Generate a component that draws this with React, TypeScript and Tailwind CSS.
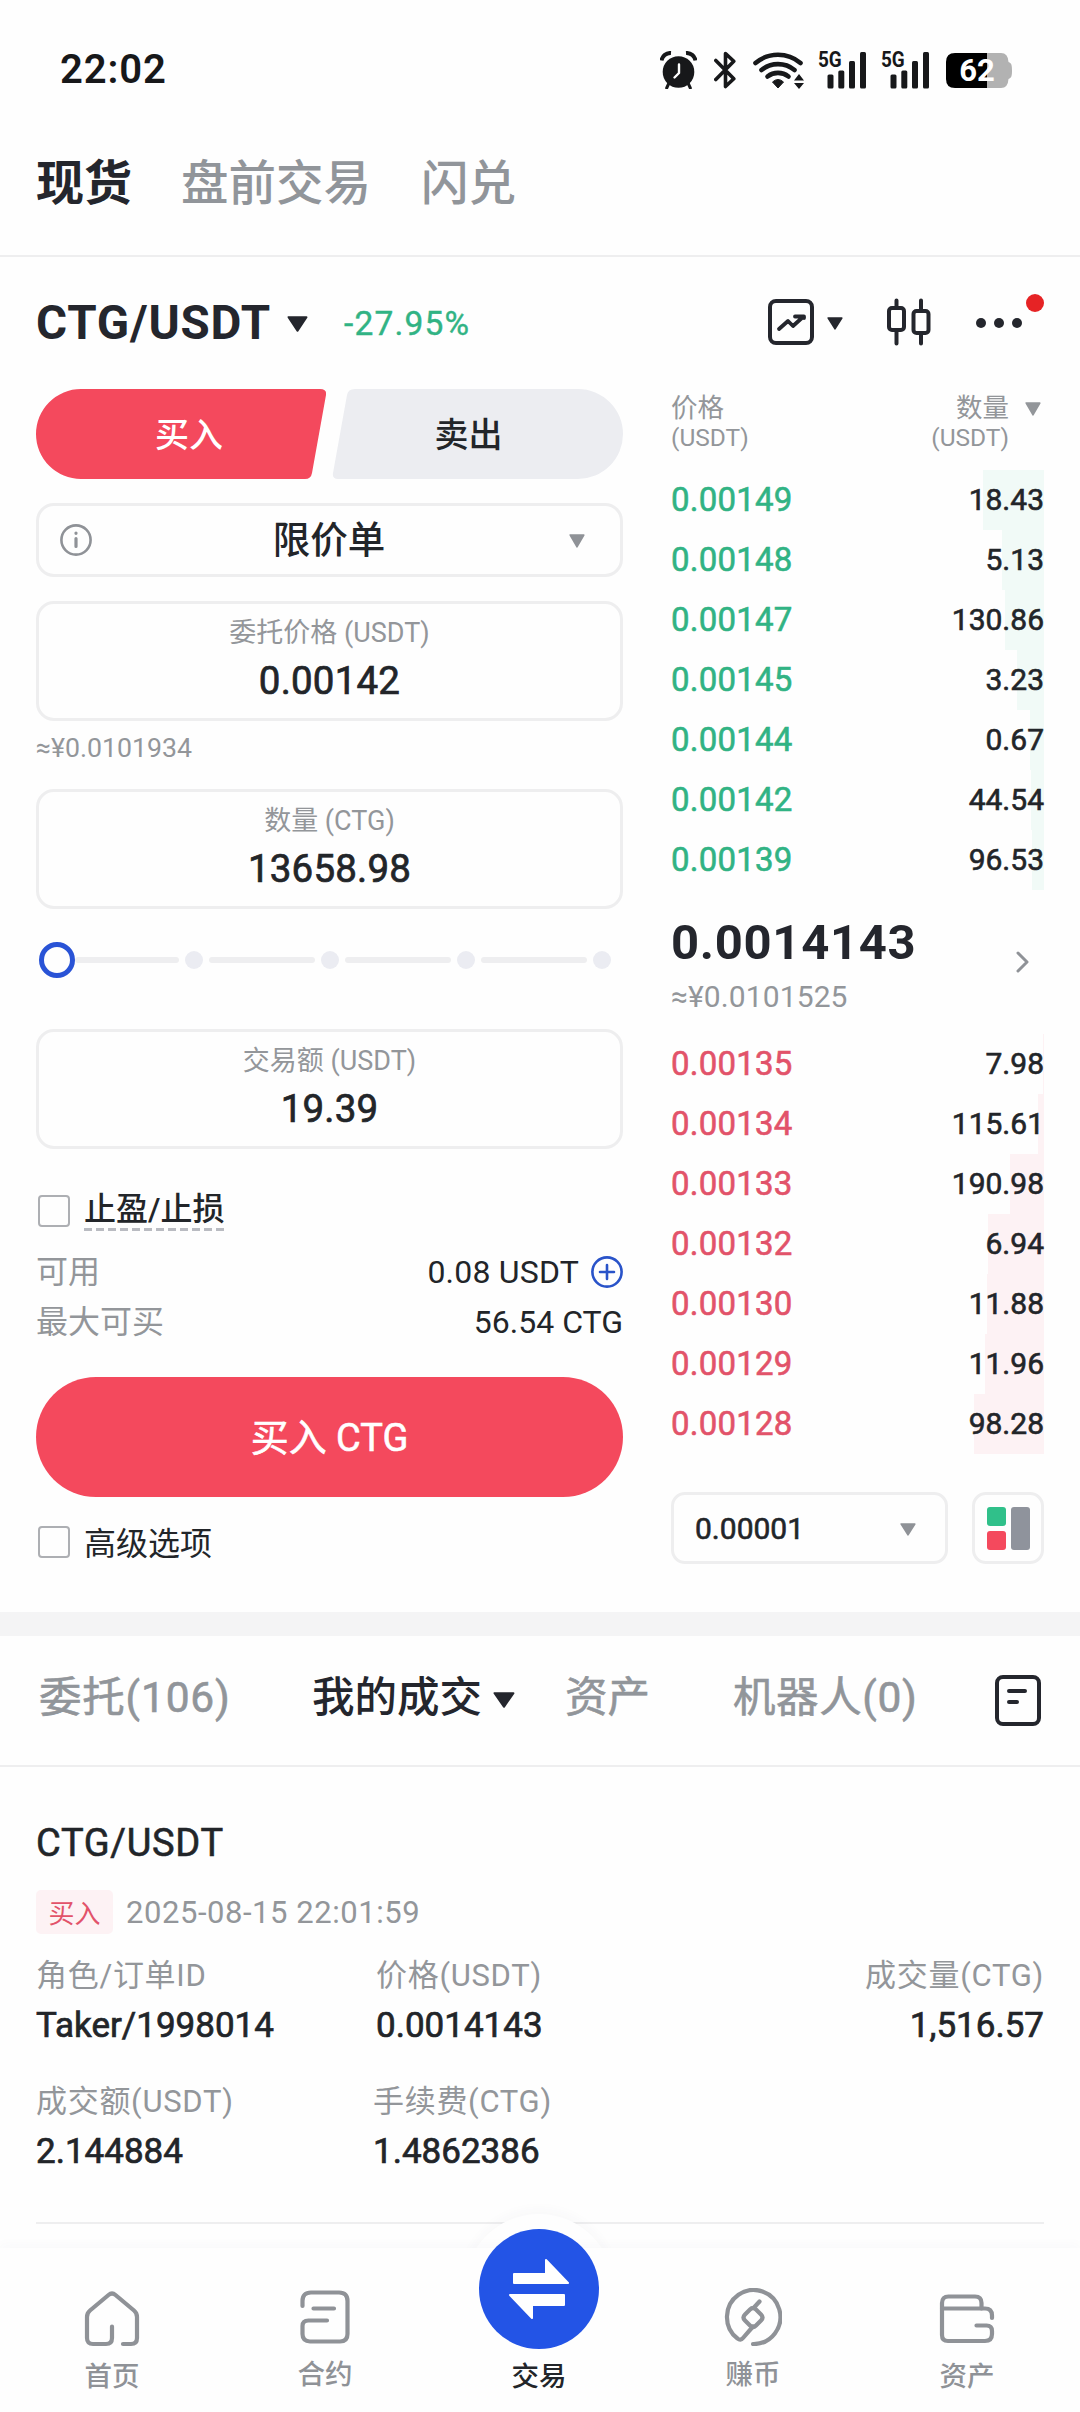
import { clsx } from "clsx";

type Level = { price: string; amount: string; depth: number };

const asks: Level[] = [
  { price: "0.00149", amount: "18.43", depth: 61 },
  { price: "0.00148", amount: "5.13", depth: 42 },
  { price: "0.00147", amount: "130.86", depth: 39 },
  { price: "0.00145", amount: "3.23", depth: 27 },
  { price: "0.00144", amount: "0.67", depth: 14 },
  { price: "0.00142", amount: "44.54", depth: 13 },
  { price: "0.00139", amount: "96.53", depth: 12 },
];

const bids: Level[] = [
  { price: "0.00135", amount: "7.98", depth: 1 },
  { price: "0.00134", amount: "115.61", depth: 6 },
  { price: "0.00133", amount: "190.98", depth: 34 },
  { price: "0.00132", amount: "6.94", depth: 56 },
  { price: "0.00130", amount: "11.88", depth: 57 },
  { price: "0.00129", amount: "11.96", depth: 59 },
  { price: "0.00128", amount: "98.28", depth: 70 },
];

function Triangle({ className }: { className: string }) {
  return (
    <svg viewBox="0 0 20 16" preserveAspectRatio="none" className={className} aria-hidden>
      <path
        d="M1.5 1.2h17L10 14.6z"
        fill="currentColor"
        stroke="currentColor"
        strokeWidth="2"
        strokeLinejoin="round"
      />
    </svg>
  );
}

function Signal() {
  return (
    <div className="relative h-[38px] w-12">
      <span className="absolute left-0 top-0 origin-left scale-x-[0.86] text-[22px] font-bold leading-[17px]">
        5G
      </span>
      <svg viewBox="0 0 48 38" className="h-[38px] w-12" fill="currentColor" aria-hidden>
        <rect x="9.5" y="23.5" width="6" height="14" rx="1.5" />
        <rect x="20.3" y="19.5" width="6" height="18" rx="1.5" />
        <rect x="31" y="10" width="6" height="27.5" rx="1.5" />
        <rect x="42" y="1" width="6" height="36.5" rx="1.5" />
      </svg>
    </div>
  );
}

function StatusBar() {
  return (
    <div className="flex h-[139px] items-center pl-[60px] text-[#17181a]">
      <span className="w-[600px] pt-px text-[40px] font-semibold leading-none tracking-[0.9px]">
        22:02
      </span>

      <svg viewBox="0 0 37 38" className="h-[38px] w-[37px] shrink-0" aria-hidden>
        <path d="M1.5 9.5A9 9 0 0 1 11 2" stroke="currentColor" strokeWidth="4" fill="none" />
        <path d="M35.5 9.5A9 9 0 0 0 26 2" stroke="currentColor" strokeWidth="4" fill="none" />
        <path d="M9 32l-2.3 5M28 32l2.3 5" stroke="currentColor" strokeWidth="3" strokeLinecap="round" />
        <circle cx="18.5" cy="21" r="15.8" fill="currentColor" />
        <path
          d="M19 13.5v8.5l-4.5 4.5"
          stroke="#fff"
          strokeWidth="2.4"
          strokeLinecap="round"
          strokeLinejoin="round"
          fill="none"
        />
      </svg>

      <svg viewBox="0 0 23 38" className="ml-[17px] h-[38px] w-[23px] shrink-0" aria-hidden>
        <path
          d="M1.8 9.5l18 18.2-8.3 7.8V2.5l8.3 7.8-18 18.2"
          stroke="currentColor"
          strokeWidth="3.6"
          strokeLinecap="round"
          strokeLinejoin="round"
          fill="none"
        />
      </svg>

      <svg viewBox="0 0 52 38" className="ml-4 h-[38px] w-[52px] shrink-0" aria-hidden>
        <g stroke="currentColor" strokeWidth="4.6" strokeLinecap="round" fill="none">
          <path d="M2.5 12a35 35 0 0 1 45 0" />
          <path d="M8.5 19a26 26 0 0 1 33 0" />
          <path d="M14.5 25.5a17 17 0 0 1 21 0" />
        </g>
        <path d="M19.5 31q5.5-5 11 0l-5.5 6z" fill="currentColor" stroke="currentColor" strokeWidth="1" strokeLinejoin="round" />
        <path d="M41 29.5h10l-5-6.5zM41 32h10l-5 6z" fill="currentColor" />
      </svg>

      <div className="ml-[13px]">
        <Signal />
      </div>
      <div className="ml-[15px]">
        <Signal />
      </div>

      <div className="relative ml-[17px] mt-[2px] h-[35px] w-[66px]">
        <svg viewBox="0 0 66 35" className="h-[35px] w-[66px]" aria-hidden>
          <path
            d="M8 0h47q7 0 7.5 9c3 1 3.5 3 3.5 8.5s-.5 7.5-3.5 8.5q-.5 9-7.5 9H41V0z"
            fill="#b2b2b2"
          />
          <path d="M9 0h32v35H9q-9 0-9-9V9q0-9 9-9z" fill="#000" />
        </svg>
        <span className="absolute inset-x-0 top-0 pr-[4px] text-center text-[31px] font-bold leading-[36px] text-white">
          62
        </span>
      </div>
    </div>
  );
}

function MarketTabs() {
  return (
    <div className="flex h-[118px] items-start border-b-2 border-[#eeeeef] pl-9 text-[47.5px] leading-[90px] text-[#91959a]">
      <span className="w-[145px] text-[48px] font-bold text-[#24262d]">现货</span>
      <span className="w-60 font-medium">盘前交易</span>
      <span className="font-medium">闪兑</span>
    </div>
  );
}

function PairHeader() {
  return (
    <div className="flex h-[130px] items-center pl-[36px] text-[#24262d]">
      <span className="w-[251px] pt-[3px] text-[47.5px] font-bold leading-none tracking-[0.8px]">CTG/USDT</span>
      <Triangle className="mt-1 h-4 w-[21px]" />
      <span className="ml-9 w-[424px] pt-1 text-[33.5px] leading-none tracking-[1.2px] text-[#31b384] [-webkit-text-stroke:0.4px]">
        -27.95%
      </span>

      <svg viewBox="0 0 46 46" className="h-[46px] w-[46px] shrink-0" fill="none" stroke="currentColor" aria-hidden>
        <rect x="2" y="2" width="42" height="42" rx="6" strokeWidth="4" />
        <path
          d="M11 30l9-8 5 5 10.5-9.500M27 17.5h9v1.5"
          strokeWidth="3.8"
          strokeLinecap="round"
          strokeLinejoin="round"
        />
      </svg>
      <Triangle className="ml-[13px] mt-0.5 h-[13px] w-4" />

      <svg viewBox="0 0 44 48" className="ml-11 h-12 w-11 shrink-0" fill="none" stroke="currentColor" strokeWidth="4" strokeLinecap="round" aria-hidden>
        <rect x="2" y="10" width="15" height="22" rx="3" />
        <rect x="26.5" y="13" width="15" height="22" rx="3" />
        <path d="M9.5 2.5V9M9.5 33v12.500M34 2.5V12M34 36v9.5" />
      </svg>

      <div className="relative ml-[45px] mt-0.5 flex w-[46px] gap-2">
        <i className="size-[10px] rounded-full bg-current" />
        <i className="size-[10px] rounded-full bg-current" />
        <i className="size-[10px] rounded-full bg-current" />
        <i className="absolute -right-[22px] -top-6 size-[18px] rounded-full bg-[#e62325]" />
      </div>
    </div>
  );
}

function Field({ label, value, className }: { label: string; value: string; className: string }) {
  return (
    <div
      className={clsx(
        "flex h-[120px] flex-col items-center rounded-[18px] border-[3px] border-[#eeeeef]",
        className,
      )}
    >
      <span className="mt-[9px] text-[27px] leading-10 text-[#93969a]">{label}</span>
      <span className="mt-1 text-[38.5px] leading-[48px] tracking-[0.2px] [-webkit-text-stroke:0.7px]">{value}</span>
    </div>
  );
}

function Slider() {
  return (
    <div className="flex h-[102px] items-center pl-[3px]">
      <i className="size-9 rounded-full border-[5px] border-[#2953d6]" />
      {[0, 1, 2, 3].map((step) => (
        <div key={step} className="flex items-center">
          <i
            className={clsx(
              "h-1.5 rounded-full bg-[#eeeef0]",
              step === 0 ? "w-[104px]" : "ml-[6px] w-[106px]",
            )}
          />
          <i className="ml-[6px] size-[18px] rounded-full bg-[#ebecf2]" />
        </div>
      ))}
    </div>
  );
}

function OrderForm() {
  return (
    <section className="w-[587px] text-[#222529]">
      <div className="flex gap-[6px] text-[34px] leading-[92px]">
        <button className="h-[90px] w-[290px] bg-[#f4495d] pl-4 text-center font-medium text-white [clip-path:path('M45,0H284Q291,0,290,6L276,84Q275,90,269,90H45A45,45,0,0,1,45,0Z')]">
          买入
        </button>
        <button className="h-[90px] w-[291px] bg-[#ecedf1] pr-[18px] text-center font-medium [clip-path:path('M23,0H246A45,45,0,0,1,246,90H6Q0,90,1,84L15,6Q16,0,23,0Z')]">
          卖出
        </button>
      </div>

      <div className="mt-6 flex h-[74px] items-center rounded-[18px] border-[3px] border-[#eeeeef]">
        <svg viewBox="0 0 32 32" className="ml-[21px] size-8" fill="none" stroke="#8f9297" aria-hidden>
          <circle cx="16" cy="16" r="14.6" strokeWidth="2.6" />
          <path d="M16 14.5v8M16 9v.3" strokeWidth="3.2" strokeLinecap="round" />
        </svg>
        <span className="flex-1 pr-[3px] text-center text-[37.5px] font-medium leading-[70px]">限价单</span>
        <Triangle className="mr-[35px] mt-0.5 h-[14px] w-4 text-[#8f9297]" />
      </div>

      <Field label="委托价格 (USDT)" value="0.00142" className="mt-6" />
      <p className="h-[54px] text-[26.7px] leading-[55px] text-[#93969a]">≈¥0.0101934</p>
      <Field label="数量 (CTG)" value="13658.98" className="mt-[14px]" />
      <Slider />
      <Field label="交易额 (USDT)" value="19.39" className="mt-[18px]" />

      <div className="mt-[30px] flex h-16 items-center pl-0.5">
        <i className="size-8 rounded-[4px] border-[2.5px] border-[#adafb3]" />
        <div className="mb-[3px] ml-[14px]">
          <div className="mt-[2px] text-[32px] font-medium leading-9">止盈/止损</div>
          <svg viewBox="0 0 140 3" className="mt-px h-[3px] w-[140px]" aria-hidden>
            <path d="M0 1.5h140" stroke="#b9bbc1" strokeWidth="3" strokeDasharray="8 4" />
          </svg>
        </div>
      </div>

      <div className="mt-1 flex h-[50px] items-center justify-between text-[32px] leading-[50px]">
        <span className="text-[#93969a]">可用</span>
        <span className="flex items-center gap-3 tracking-[0.2px]">
          0.08 USDT
          <svg viewBox="0 0 32 32" className="size-8" fill="none" stroke="#2953c9" strokeWidth="2.6" strokeLinecap="round" aria-hidden>
            <circle cx="16" cy="16" r="14.6" />
            <path d="M16 9v14M9 16h14" />
          </svg>
        </span>
      </div>
      <div className="flex h-[50px] items-center justify-between text-[32px] leading-[50px]">
        <span className="text-[#93969a]">最大可买</span>
        <span>56.54 CTG</span>
      </div>

      <button className="mt-[30px] block h-[120px] w-full rounded-full bg-[#f4495d] text-center text-[38px] leading-[123px] text-white [-webkit-text-stroke:0.6px]">
        买入 CTG
      </button>

      <div className="mt-[13px] flex h-16 items-center pl-0.5">
        <i className="size-8 rounded-[4px] border-[2.5px] border-[#adafb3]" />
        <span className="ml-[14px] mt-1 text-[32px] leading-10">高级选项</span>
      </div>
    </section>
  );
}

function Levels({ levels, side }: { levels: Level[]; side: "ask" | "bid" }) {
  return (
    <div>
      {levels.map((level) => (
        <div key={level.price} className="relative flex h-[60px] justify-between leading-[60px]">
          <i
            className={clsx("absolute right-0 top-0 h-full", side === "ask" ? "bg-[#f1faf7]" : "bg-[#fdf2f4]")}
            style={{ width: level.depth }}
          />
          <span
            className={clsx(
              "text-[33px] tracking-[0.2px] [-webkit-text-stroke:0.6px]",
              side === "ask" ? "text-[#31b384]" : "text-[#e2536a]",
            )}
          >
            {level.price}
          </span>
          <span className="relative text-[30px] text-[#222529] [-webkit-text-stroke:0.6px]">{level.amount}</span>
        </div>
      ))}
    </div>
  );
}

function OrderBook() {
  return (
    <section className="ml-12 w-[373px]">
      <div className="mt-1 flex justify-between text-[26.5px] leading-[30px] text-[#93969a]">
        <div>
          <div>价格</div>
          <div className="text-[24.5px]">(USDT)</div>
        </div>
        <div className="flex">
          <div className="text-right">
            <div>数量</div>
            <div className="text-[24.5px]">(USDT)</div>
          </div>
          <Triangle className="ml-4 mr-[3px] mt-[9px] h-[14px] w-4" />
        </div>
      </div>

      <div className="mt-[17px]">
        <Levels levels={asks} side="ask" />
      </div>

      <div className="flex h-36 items-center justify-between">
        <div className="pt-1.5">
          <div className="text-[49px] font-bold leading-[60px] tracking-[0.7px] text-[#24262d]">0.0014143</div>
          <div className="mt-1 text-[30px] leading-10 tracking-[0.1px] text-[#93969a]">≈¥0.0101525</div>
        </div>
        <svg viewBox="0 0 13 22" className="mr-[15px] h-[22px] w-[13px]" fill="none" aria-hidden>
          <path d="M2 2l9 9-9 9" stroke="#8f9297" strokeWidth="3" strokeLinecap="round" strokeLinejoin="round" />
        </svg>
      </div>

      <Levels levels={bids} side="bid" />

      <div className="mt-[38px] flex justify-between">
        <div className="flex h-[72px] w-[277px] items-center justify-between rounded-[14px] border-[3px] border-[#eeeeef] pl-[21px] pr-[29px]">
          <span className="pt-0.5 text-[30px] leading-none text-[#222529] [-webkit-text-stroke:0.6px]">0.00001</span>
          <Triangle className="mt-0.5 h-[13px] w-4 text-[#8f9297]" />
        </div>
        <div className="flex size-[72px] items-center justify-center gap-[5px] rounded-[14px] border-[3px] border-[#eeeeef]">
          <div className="flex flex-col gap-[5px]">
            <i className="size-[19px] rounded-[3px] bg-[#30c08a]" />
            <i className="size-[19px] rounded-[3px] bg-[#f4495d]" />
          </div>
          <i className="h-[43px] w-[19px] rounded-[3px] bg-[#8f939c]" />
        </div>
      </div>
    </section>
  );
}

function RecordTabs() {
  return (
    <div className="grid h-[131px] grid-cols-[273px_253px_168px_262px_46px] items-center border-b-2 border-[#eeeeef] pl-[39px] text-[42.5px] leading-[60px] text-[#91959a] [-webkit-text-stroke:0.6px]">
      <span className="-mt-[5px] tracking-[0.8px]">委托(106)</span>
      <span className="-mt-[5px] flex items-center font-medium text-[#24262d] [-webkit-text-stroke:0]">
        我的成交
        <Triangle className="ml-[11px] mt-1 h-4 w-[22px]" />
      </span>
      <span className="-mt-[5px]">资产</span>
      <span className="-mt-[5px] tracking-[0.6px]">机器人(0)</span>
      <svg viewBox="0 0 46 51" className="h-[51px] w-[46px]" fill="none" stroke="#24262d" strokeWidth="4" strokeLinecap="round" aria-hidden>
        <rect x="2" y="2" width="42" height="47" rx="6" />
        <path d="M14 16h16M14 27h8" />
      </svg>
    </div>
  );
}

function Cell({ label, value, className }: { label: string; value: string; className?: string }) {
  return (
    <div className={className}>
      <div className="text-[31px] leading-10 tracking-[0.7px] text-[#93969a]">{label}</div>
      <div className="mt-2 text-[35px] leading-[44px] [-webkit-text-stroke:0.7px]">{value}</div>
    </div>
  );
}

function TradeRecord() {
  return (
    <section className="mx-9 border-b-2 border-[#eeeeef] pb-12 pt-[51px] text-[#222529]">
      <h2 className="text-[38px] leading-[50px] tracking-[0.7px] [-webkit-text-stroke:0.6px]">CTG/USDT</h2>
      <div className="mt-[22px] flex h-11 items-center">
        <span className="h-11 w-[77px] rounded-[5px] bg-[#fdf2f4] text-center text-[26px] leading-[48px] text-[#e2536a]">
          买入
        </span>
        <span className="ml-[13px] mt-0.5 text-[31px] leading-[48px] tracking-[0.55px] text-[#93969a]">
          2025-08-15 22:01:59
        </span>
      </div>
      <div className="mt-[22px] flex">
        <Cell label="角色/订单ID" value="Taker/1998014" className="w-[340px]" />
        <Cell label="价格(USDT)" value="0.0014143" />
        <Cell label="成交量(CTG)" value="1,516.57" className="ml-auto text-right" />
      </div>
      <div className="mt-[34px] flex">
        <Cell label="成交额(USDT)" value="2.144884" className="w-[337px]" />
        <Cell label="手续费(CTG)" value="1.4862386" />
      </div>
    </section>
  );
}

const navIcon = "h-[58px] w-[58px]";

function BottomNav() {
  return (
    <nav className="relative mt-auto h-[164px] shrink-0">
      <i className="absolute left-[464px] top-[-34px] size-[150px] rounded-full bg-[#fefefe] shadow-[0_-4px_12px_rgba(60,70,90,0.03)]" />
      <div className="relative flex h-full bg-[#fefefe] pl-[4px] text-[27.5px] font-medium leading-[34px] text-[#8f9297] shadow-[0_-5px_10px_rgba(60,70,90,0.02)]">
        <div className="flex w-[214px] flex-col items-center pl-[2px] pt-[41px]">
          <svg viewBox="0 0 58 58" className={navIcon} fill="none" stroke="currentColor" strokeWidth="4.2" strokeLinecap="round" strokeLinejoin="round" aria-hidden>
            <path d="M29 37.5V49q0 6-6 6H10q-6 0-6-6V28q0-4 3-6.5L25.5 6q3.5-3 7 0L51 21.5q3 2.5 3 6.5v21q0 6-6 6h-8" />
          </svg>
          <span className="mt-[13px]">首页</span>
        </div>
        <div className="flex w-[214px] flex-col items-center pt-10">
          <svg viewBox="0 0 58 58" className={navIcon} fill="none" stroke="currentColor" strokeWidth="4.2" strokeLinecap="round" strokeLinejoin="round" aria-hidden>
            <path d="M6.5 18v-5q0-8.5 8.5-8.5h28q8.5 0 8.5 8.5v33q0 7.5-7.5 7.500H14q-7.5 0-7.5-7.500V38q0-5.5 6-5.500H31M17.5 20.500H38" />
          </svg>
          <span className="mt-[12px]">合约</span>
        </div>
        <div className="flex w-[214px] flex-col items-center pt-[112px] text-[#222529]">
          <span>交易</span>
        </div>
        <div className="flex w-[214px] flex-col items-center pt-10">
          <svg viewBox="0 0 58 58" className={navIcon} fill="none" stroke="currentColor" strokeWidth="4.2" strokeLinecap="round" strokeLinejoin="round" aria-hidden>
            <path d="M29 56A26.7 27 0 1 0 13.5 50.5q3 2.5 5.5-.5L29 38.5" />
            <path d="M26 21.5q3-3 6 0l5 5q3 3 0 6l-5 5q-3 3-6 0l-5-5q-3-3 0-6zM30 19.5l5.5-6" />
          </svg>
          <span className="mt-[12px]">赚币</span>
        </div>
        <div className="flex w-[214px] flex-col items-center pt-10">
          <svg viewBox="0 0 58 58" className={navIcon} fill="none" stroke="currentColor" strokeWidth="4.2" strokeLinecap="round" strokeLinejoin="round" aria-hidden>
            <path d="M4 20.5V15q0-6.5 6.5-6.500H37q6.5 0 6.5 6.5v5.5" />
            <path d="M4 20.5h43q7 0 7 7V30M4 20.5V47q0 6 6 6h37q7 0 7-7v-3q0-5.5-5.5-5.500h-10" />
          </svg>
          <span className="mt-[14px]">资产</span>
        </div>
      </div>
      <button className="absolute left-[479px] top-[-19px] size-[120px] rounded-full bg-[#2354e6]">
        <svg viewBox="0 0 120 120" className="size-[120px]" fill="#fff" stroke="#fff" strokeWidth="2" strokeLinejoin="round" aria-hidden>
          <path d="M35 45h32V31l22 23H35zM85 66H31l22 23V76h32z" />
        </svg>
      </button>
    </nav>
  );
}

export default function App() {
  return (
    <div className="flex h-[2412px] w-[1080px] flex-col overflow-hidden bg-[#fefefe] font-['Roboto','Noto_Sans_CJK_SC',sans-serif]">
      <StatusBar />
      <MarketTabs />
      <PairHeader />
      <main className="flex h-[1225px] shrink-0 pl-9 pt-0.5">
        <OrderForm />
        <OrderBook />
      </main>
      <div className="h-6 shrink-0 bg-[#f4f4f5]" />
      <RecordTabs />
      <TradeRecord />
      <BottomNav />
    </div>
  );
}
